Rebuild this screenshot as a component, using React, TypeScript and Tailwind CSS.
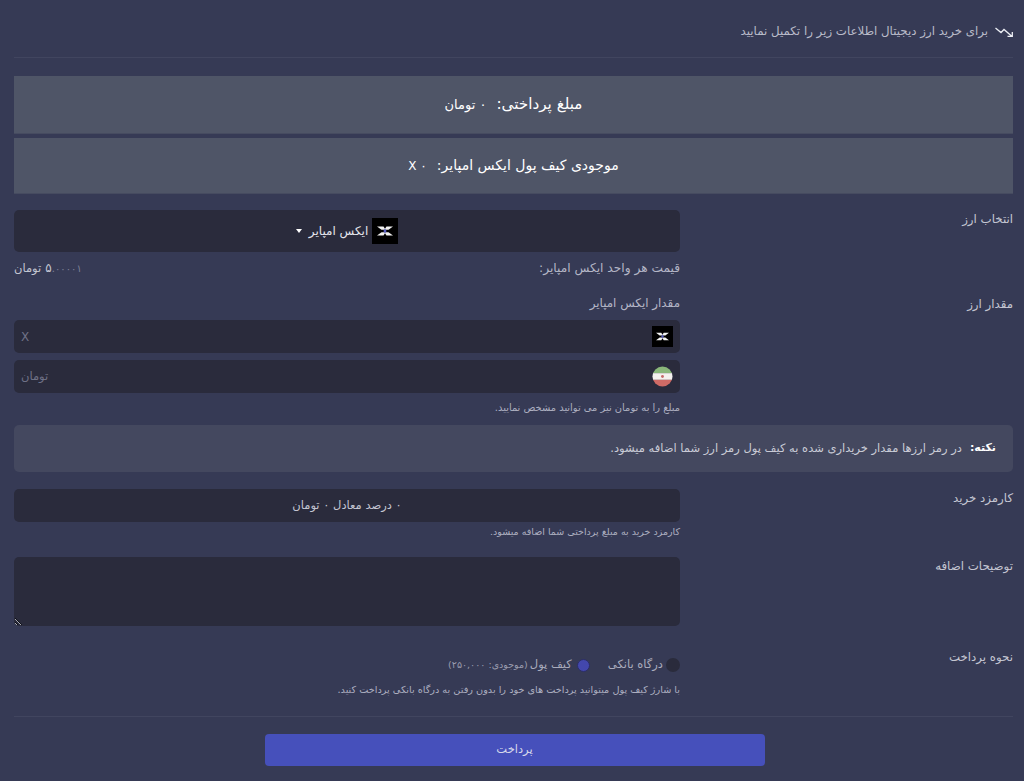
const fa = 'font-["DejaVu_Sans",sans-serif]';

// Xempire logo, small black tile with white wings
function CoinLogo({ size }: { size: string }) {
  return (
    <svg viewBox="0 0 26 26" className={`${size} shrink-0`}>
      <rect width="26" height="26" fill="#000" />
      <path d="M5 8.500h6.500l1.500 2.200 1.500-2.200H21l-4.500 3.200H9.500z" fill="#f2f2f2" />
      <path d="M5 17.500h6.500l1.500-2.200 1.500 2.200H21l-4.500-3.200h-7z" fill="#f2f2f2" />
      <path d="M13 10.500l1.600 2.500-1.600 2.500-1.600-2.500z" fill="#5a5fc0" />
    </svg>
  );
}

function IranFlag() {
  return (
    <svg viewBox="0 0 22 22" className="w-[21px] h-[21px] shrink-0">
      <defs>
        <clipPath id="flag">
          <circle cx="11" cy="11" r="10.500" />
        </clipPath>
      </defs>
      <g clipPath="url(#flag)">
        <rect width="22" height="7.500" fill="#8ab77a" />
        <rect y="7.500" width="22" height="7" fill="#f4f1ee" />
        <rect y="14.500" width="22" height="7.500" fill="#cf6b66" />
        <circle cx="11" cy="11" r="1.500" fill="#c46a6a" />
      </g>
    </svg>
  );
}

function Row({ label, children, className }: { label: string; children: React.ReactNode; className?: string }) {
  return (
    <div className={`grid grid-cols-[333px_666px] ${className ?? ''}`}>
      <div className="text-[11.800px] text-[#c4c6d2] leading-[18px]">{label}</div>
      <div>{children}</div>
    </div>
  );
}

export default function App() {
  return (
    <div dir="rtl" className={`${fa} h-[781px] overflow-hidden bg-[#363a55] text-[#c4c6d2] pr-[11px] pl-[14px]`}>
      <div className="h-[58px] border-b border-[#41455f] flex items-center gap-[7px] pt-[7px]">
        <svg viewBox="0 0 18 10" className="w-[18px] h-[10px] shrink-0" fill="none" stroke="#eceef4" strokeWidth="1.300">
          <path d="M0.500 1l5.500 4.500 3-3 7.500 6.500M12.500 9.300h4.800V5" />
        </svg>
        <span className="text-[11.800px] text-[#b9bbc9]">برای خرید ارز دیجیتال اطلاعات زیر را تکمیل نمایید</span>
      </div>

      <div className="mt-[18px] h-[58px] bg-[#4f5567] flex items-center justify-center gap-[10px] text-white border-b border-[#464b60]">
        <span className="text-[15.200px]">مبلغ پرداختی:</span>
        <span className="text-[13px]">۰ تومان</span>
      </div>
      <div className="mt-[4px] h-[56px] bg-[#4f5567] flex items-center justify-center gap-[10px] text-white border-b border-[#464b60]">
        <span className="text-[14px]">موجودی کیف پول ایکس امپایر:</span>
        <span className="text-[12px]">۰ X</span>
      </div>

      <Row label="انتخاب ارز" className="mt-[16px]">
        <div className="h-[42px] rounded-[5px] bg-[#2a2b3c] flex items-center justify-center gap-[4px]">
          <CoinLogo size="w-[26px] h-[26px]" />
          <span className="text-[12px] text-[#e4e5ec]">ایکس امپایر</span>
          <span className="mr-[3px] w-0 h-0 border-x-[3.500px] border-x-transparent border-t-[4px] border-t-white" />
        </div>
        <div className="mt-[6px] h-[20px] flex items-center justify-between text-[12.200px]">
          <span className="text-[#b4b6c6]">قیمت هر واحد ایکس امپایر:</span>
          <span className="flex items-baseline text-[#c4c6d2]">
            <span dir="ltr">
              <span className="text-[12px]">۵</span>
              <span className="text-[#7d8095] text-[10px]">.۰۰۰۰۱</span>
            </span>
            <span className="mr-[4px] text-[11.500px]">تومان</span>
          </span>
        </div>
      </Row>

      <Row label="مقدار ارز" className="mt-[17px]">
        <div className="h-[17px] flex items-center text-[11.900px] text-[#b4b6c6]">مقدار ایکس امپایر</div>
        <div className="mt-[8px] h-[33px] rounded-[5px] bg-[#2a2b3c] flex items-center justify-between px-[7px]">
          <CoinLogo size="w-[21px] h-[21px]" />
          <span className="text-[12px] text-[#6f7186]">X</span>
        </div>
        <div className="mt-[7px] h-[33px] rounded-[5px] bg-[#2a2b3c] flex items-center justify-between px-[7px]">
          <IranFlag />
          <span className="text-[11.500px] text-[#6f7186]">تومان</span>
        </div>
        <div className="mt-[8px] text-[9.900px] leading-[14px] text-[#adafc0]">مبلغ را به تومان نیز می توانید مشخص نمایید.</div>
      </Row>

      <div className="mt-[10px] h-[47px] rounded-[5px] bg-[#44485f] flex items-center gap-[8px] pr-[17px]">
        <span className="font-bold text-white text-[11px]">نکته:</span>
        <span className="text-[#c9cbd6] text-[11.500px]">در رمز ارزها مقدار خریداری شده به کیف پول رمز ارز شما اضافه میشود.</span>
      </div>

      <Row label="کارمزد خرید" className="mt-[17px]">
        <div className="h-[33px] rounded-[5px] bg-[#2a2b3c] flex items-center justify-center text-[11.500px] text-[#c4c6d2]">۰ درصد معادل ۰ تومان</div>
        <div className="mt-[3px] text-[9.500px] leading-[14px] text-[#adafc0]">کارمزد خرید به مبلغ پرداختی شما اضافه میشود.</div>
      </Row>

      <Row label="توضیحات اضافه" className="mt-[18px]">
        <textarea className="block w-full h-[69px] rounded-[5px] bg-[#2a2b3c] outline-none" />
      </Row>

      <Row label="نحوه پرداخت" className="mt-[22px]">
        <div className="mt-[7px] h-[20px] flex items-center text-[11.500px] text-[#a9abbc]">
          <span className="w-[14px] h-[14px] rounded-full bg-[#2a2b3c] shrink-0" />
          <span className="mr-[3px]">درگاه بانکی</span>
          <span className="mr-[18px] w-[13px] h-[13px] rounded-full bg-[#4347ad] border border-[#2c2e66] shrink-0" />
          <span className="mr-[5px]">کیف پول</span>
          <span className="mr-[2px] text-[9.500px] text-[#9a9cae]">(موجودی: ۲۵۰,۰۰۰)</span>
        </div>
        <div className="mt-[8px] text-[9.700px] leading-[14px] text-[#adafc0]">با شارژ کیف پول میتوانید پرداخت های خود را بدون رفتن به درگاه بانکی پرداخت کنید.</div>
      </Row>

      <div className="mt-[19px] border-t border-[#41455f] pt-[17px] pl-[2px] flex justify-center">
        <button className="w-[500px] h-[32px] rounded-[4px] bg-[#4650bb] text-[11.500px] text-[#d5d7ea]">پرداخت</button>
      </div>
    </div>
  );
}
